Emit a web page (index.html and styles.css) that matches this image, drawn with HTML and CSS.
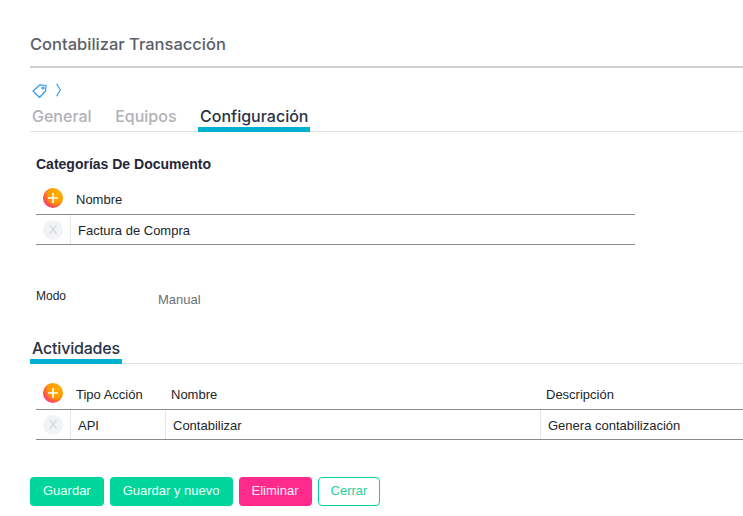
FILE: index.html
```html
<!DOCTYPE html>
<html lang="es">
<head>
<meta charset="utf-8">
<title>Contabilizar Transacción</title>
<link rel="stylesheet" href="styles.css">
</head>
<body>
<main class="page">
  <h1 class="title">Contabilizar Transacción</h1>
  <div class="crumbs">
    <svg class="tag" width="16" height="16" viewBox="0 0 16 16" fill="none" stroke="#2e9bf0" stroke-width="1.2" stroke-linejoin="round"><path d="M1 8 8 1.8 14 2.5 13.5 8 7.5 14.5Z"/><circle cx="11" cy="5" r="1"/></svg>
    <svg class="chev" width="6" height="16" viewBox="0 0 6 16" fill="none" stroke="#2e9bf0" stroke-width="1.1"><path d="M.6.8 4.3 7 .6 13.2"/></svg>
  </div>
  <nav class="tabs">
    <span class="tab">General</span>
    <span class="tab">Equipos</span>
    <span class="tab active">Configuración</span>
  </nav>

  <section class="cat">
    <h2 class="sub">Categorías De Documento</h2>
    <div class="grid grid-cat">
      <div class="row head">
        <div class="cell c-btn"><span class="add"><svg width="20" height="20" viewBox="0 0 20 20"><path d="M10 5v10M5 10h10" stroke="#fff" stroke-width="1.6"/></svg></span></div>
        <div class="cell">Nombre</div>
      </div>
      <div class="row body">
        <div class="cell c-btn"><span class="del">X</span></div>
        <div class="cell">Factura de Compra</div>
      </div>
    </div>
  </section>

  <div class="field">
    <span class="f-label">Modo</span>
    <span class="f-value">Manual</span>
  </div>

  <nav class="tabs tabs-act">
    <span class="tab active">Actividades</span>
  </nav>

  <div class="grid grid-act">
    <div class="row head">
      <div class="cell c-btn"><span class="add"><svg width="20" height="20" viewBox="0 0 20 20"><path d="M10 5v10M5 10h10" stroke="#fff" stroke-width="1.6"/></svg></span></div>
      <div class="cell c-tipo">Tipo Acción</div>
      <div class="cell c-nom">Nombre</div>
      <div class="cell">Descripción</div>
    </div>
    <div class="row body">
      <div class="cell c-btn"><span class="del">X</span></div>
      <div class="cell c-tipo">API</div>
      <div class="cell c-nom">Contabilizar</div>
      <div class="cell">Genera contabilización</div>
    </div>
  </div>

  <div class="actions">
    <button class="btn green">Guardar</button>
    <button class="btn green">Guardar y nuevo</button>
    <button class="btn pink">Eliminar</button>
    <button class="btn outline">Cerrar</button>
  </div>
</main>
</body>
</html>
```

FILE: styles.css
```css
* { box-sizing: border-box; }
html, body { margin: 0; padding: 0; background: #fff; }
body { font-family: "Liberation Sans", Arial, sans-serif; font-size: 13px; color: #212529; overflow: hidden; }
.page { width: 743px; height: 516px; padding: 32px 0 0 30px; }
.title { margin: 0; height: 36px; border-bottom: 2px solid #cfcfd3; font: 500 16.5px/24px Inter, sans-serif; color: #5a5f69; }
.crumbs { display: flex; align-items: center; gap: 8px; height: 16px; margin: 15px 0 0 2px; }
.tabs { display: flex; gap: 19.5px; border-bottom: 1px solid #e2e3e5; height: 33px; margin-top: 0; }
.tab { height: 33px; padding: 7px 2px 0; font: 500 16px/20px Inter, sans-serif; color: #b0b2b6; }
.tab.active { color: #2b3245; border-bottom: 5px solid #00b1d2; }
.cat { margin: 23px 0 0 6px; width: 599px; }
.sub { margin: 0; font-size: 14px; line-height: 18px; font-weight: 700; color: #1f2738; }
.grid-cat { margin-top: 12px; }
.row { display: flex; font-size: 13px; }
.head { height: 30px; border-bottom: 1px solid #8c8c8c; color: #212529; }
.body { height: 30px; border-bottom: 1px solid #8c8c8c; }
.cell { display: flex; align-items: center; }
.head .cell { padding-left: 5px; }
.body .cell { padding: 1px 0 0 7px; border-left: 1px solid #e6e6e6; }
.c-btn { width: 35px; padding-left: 7px !important; border-left: 0 !important; flex: none; }
.body .c-btn { width: 34px; padding-top: 0 !important; }
.add { width: 20px; height: 20px; border-radius: 50%; background: radial-gradient(circle at 70% 30%, #ffb000 0, #ff9a00 45%, #ff5050 68%, #ff2d8a 80%); display: block; margin-top: -3px; }
.add svg { display: block; }
.del { width: 20px; height: 20px; border-radius: 50%; background: #f2f3f5; color: #d3d5d9; font-size: 13px; text-align: center; line-height: 20px; display: block; }
.field { display: flex; margin: 44px 0 0 6px; height: 30px; }
.f-label { width: 122px; font-size: 12px; line-height: 14px; }
.f-value { color: #6c7178; font-size: 13px; padding-top: 3px; line-height: 16px; }
.tabs-act { margin-top: 12px; }
.tabs-act .tab { letter-spacing: -.2px; }
.grid-act { margin: 16px 0 0 6px; }
.c-tipo { width: 95px; flex: none; }
.c-nom { width: 375px; flex: none; }
.actions { display: flex; gap: 6px; margin-top: 37px; }
.btn { height: 29px; padding: 0 12px 2px; border-radius: 4px; border: 1px solid transparent; font: 13px/15px "Liberation Sans", Arial, sans-serif; cursor: pointer; }
.green { background: #00d69b; color: #eafff8; }
.pink { background: #ff2a8c; color: #fff0f7; }
.outline { background: #fff; border-color: #00d69b; color: #1fcf9e; }
```
